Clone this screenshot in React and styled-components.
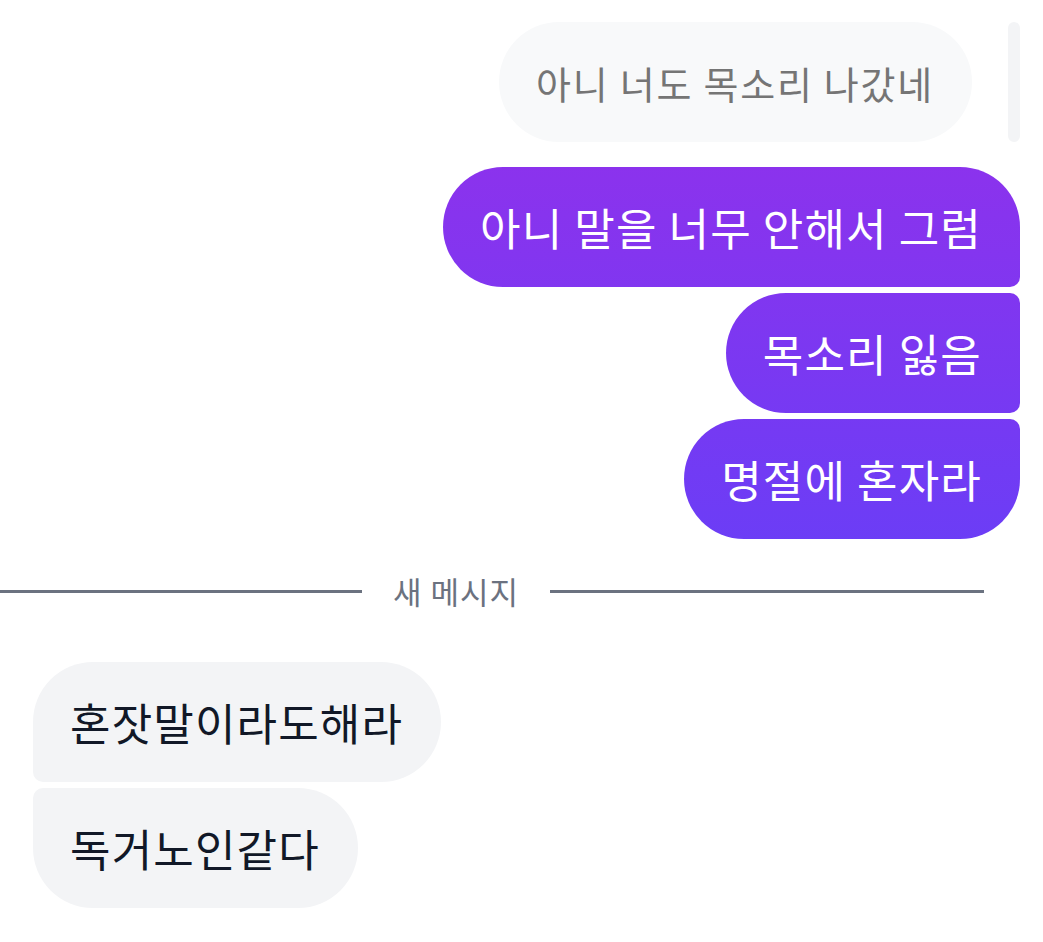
import React from "react";
import styled, { createGlobalStyle, css } from "styled-components";

const Global = createGlobalStyle`
  html, body { margin: 0; padding: 0; background: #ffffff; }
  body { font-family: "Noto Sans CJK KR", "Noto Sans", sans-serif; }
`;

const Page = styled.div`
  width: 1043px;
  height: 942px;
  box-sizing: border-box;
  padding: 22px 23px 0 33px;
  display: flex;
  flex-direction: column;
  overflow: hidden;
`;

const ReplyRow = styled.div`
  display: flex;
  justify-content: flex-end;
  align-items: stretch;
  gap: 36px;
`;

const QuoteBar = styled.div`
  width: 12px;
  border-radius: 6px;
  background: #f3f4f6;
`;

const Group = styled.div`
  display: flex;
  flex-direction: column;
  align-items: ${(p) => (p.$mine ? "flex-end" : "flex-start")};
  gap: 6px;
  margin-top: ${(p) => p.$top || 0}px;
`;

const big = 60;
const small = 10;

const radius = (mine, pos) => {
  if (mine) {
    const tr = pos === "first" || pos === "single" ? big : small;
    const br = pos === "last" || pos === "single" ? big : small;
    return `${big}px ${tr}px ${br}px ${big}px`;
  }
  const tl = pos === "first" || pos === "single" ? big : small;
  const bl = pos === "last" || pos === "single" ? big : small;
  return `${tl}px ${big}px ${big}px ${bl}px`;
};

const Bubble = styled.div`
  box-sizing: border-box;
  height: 120px;
  display: flex;
  align-items: center;
  padding: 0 38px 0 37px;
  white-space: nowrap;
  font-size: 44px;
  letter-spacing: 1.15px;
  line-height: 60px;
  border-radius: ${(p) => radius(p.$mine, p.$pos)};
  ${(p) =>
    p.$mine
      ? css`
          color: #ffffff;
          background: linear-gradient(180deg, #992ee9 0px, #4a48ff 942px);
          background-attachment: fixed;
        `
      : css`
          color: #111827;
          background: #f3f4f6;
        `}
`;

const QuoteBubble = styled.div`
  box-sizing: border-box;
  height: 120px;
  display: flex;
  align-items: center;
  padding: 0 38px 0 37px;
  border-radius: 60px;
  background: #f8f9fa;
  color: #757575;
  font-size: 38px;
  letter-spacing: 1.75px;
  white-space: nowrap;
`;

const Divider = styled.div`
  display: grid;
  grid-template-columns: 362px auto 1fr;
  align-items: center;
  column-gap: 31px;
  margin: 32px 36px 0 -33px;
  height: 40px;
`;

const Line = styled.div`
  height: 3px;
  background: #6b7280;
`;

const DividerText = styled.span`
  font-size: 31px;
  letter-spacing: 1px;
  color: #6b7280;
  line-height: 40px;
  white-space: nowrap;
`;

const mine = ["아니 말을 너무 안해서 그럼", "목소리 잃음", "명절에 혼자라"];
const theirs = ["혼잣말이라도해라", "독거노인같다"];

const pos = (i, n) => (n === 1 ? "single" : i === 0 ? "first" : i === n - 1 ? "last" : "mid");

export default function App() {
  return (
    <>
      <Global />
      <Page>
        <ReplyRow>
          <QuoteBubble>아니 너도 목소리 나갔네</QuoteBubble>
          <QuoteBar />
        </ReplyRow>
        <Group $mine $top={25}>
          {mine.map((t, i) => (
            <Bubble key={t} $mine $pos={pos(i, mine.length)}>
              {t}
            </Bubble>
          ))}
        </Group>
        <Divider>
          <Line />
          <DividerText>새 메시지</DividerText>
          <Line />
        </Divider>
        <Group $top={51}>
          {theirs.map((t, i) => (
            <Bubble key={t} $pos={pos(i, theirs.length)}>
              {t}
            </Bubble>
          ))}
        </Group>
      </Page>
    </>
  );
}
